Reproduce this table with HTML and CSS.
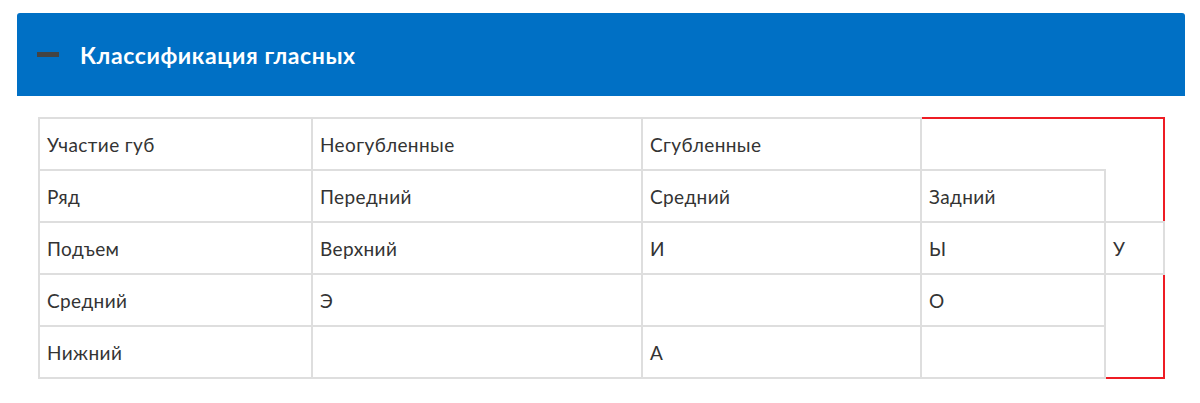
FILE: index.html
```html
<!DOCTYPE html>
<html lang="ru">
<head>
<meta charset="utf-8">
<title>Классификация гласных</title>
<link rel="stylesheet" href="styles.css">
</head>
<body>
<div class="page">
  <section class="accordion">
    <div class="accordion-head">
      <span class="toggle"></span>
      <h2 class="accordion-title">Классификация гласных</h2>
    </div>
    <div class="accordion-body">
      <table class="vowels">
        <colgroup>
          <col class="c1"><col class="c2"><col class="c3"><col class="c4"><col class="c5">
        </colgroup>
        <tbody>
          <tr><td>Участие губ</td><td>Неогубленные</td><td>Сгубленные</td></tr>
          <tr><td>Ряд</td><td>Передний</td><td>Средний</td><td>Задний</td></tr>
          <tr><td>Подъем</td><td>Верхний</td><td>И</td><td>Ы</td><td>У</td></tr>
          <tr><td>Средний</td><td>Э</td><td></td><td>О</td></tr>
          <tr><td>Нижний</td><td></td><td>А</td><td></td></tr>
        </tbody>
      </table>
    </div>
  </section>
</div>
</body>
</html>
```

FILE: styles.css
```css
html, body {
  margin: 0;
  padding: 0;
  background: #ffffff;
}

.page {
  padding: 13px 15px 0 17px;
}

.accordion-head {
  display: flex;
  align-items: center;
  gap: 21px;
  height: 83px;
  padding: 0 20px;
  background: #0070c5;
  border-radius: 3px 3px 0 0;
}

.toggle {
  display: block;
  width: 22px;
  height: 5px;
  background: #444444;
}

.accordion-title {
  margin: 0;
  color: #ffffff;
  font-family: "Lato", "Noto Sans", sans-serif;
  font-weight: 700;
  font-size: 23px;
  letter-spacing: 0.6px;
}

.accordion-body {
  padding: 21px 21px 0 21px;
}

.vowels {
  width: 1125px;
  table-layout: fixed;
  border-collapse: collapse;
  border: 2px solid #ee1c24;
  font-family: "Lato", "Noto Sans", sans-serif;
  font-size: 19px;
  letter-spacing: 0.4px;
  color: #333333;
}

.c1 { width: 273px; }
.c2 { width: 330px; }
.c3 { width: 279px; }
.c4 { width: 184px; }
.c5 { width: 59px; }

.vowels td {
  height: 52px;
  padding: 0 7px;
  border: 2px solid #dedede;
  vertical-align: middle;
  box-sizing: border-box;
}
```
